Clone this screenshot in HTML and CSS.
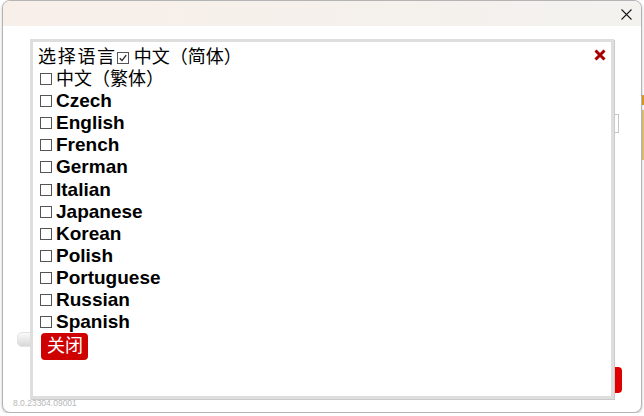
FILE: index.html
```html
<!DOCTYPE html>
<html>

<head>
    <meta charset="utf-8">
    <title>选择语言</title>
    <link rel="stylesheet" href="styles.css">
</head>

<body>
    <div class="win">
        <div class="titlebar">
            <svg class="winclose" width="11" height="11" viewBox="0 0 11 11">
                <path d="M0.5 0.5L10.5 10.5M10.5 0.5L0.5 10.5" stroke="#1a1a1a" stroke-width="1.1" fill="none" />
            </svg>
        </div>
        <div class="winbody">
            <div class="bg-input"></div>
            <div class="bg-btn"></div>
            <div class="bg-red"></div>
            <div class="ver">8.0.23304.09001</div>
        </div>

        <div class="lang">
            <div class="row">
                <svg class="x" width="12" height="12" viewBox="0 0 12 12">
                    <path d="M1.5 1.5L10.5 10.5M10.5 1.5L1.5 10.5" stroke="#a80000" stroke-width="3" fill="none" />
                </svg>
                <span class="ttl">选择语言</span><svg class="cb on" width="12" height="12" viewBox="0 0 12 12">
                    <rect x="0.5" y="0.5" width="11" height="11" fill="#fff" stroke="#555" />
                    <path d="M2.8 6.2L5 8.6L9.2 3.2" stroke="#222" stroke-width="1.3" fill="none" />
                </svg><span>中文（简体）</span>
            </div>
            <div class="row"><span class="cb"></span><span>中文（繁体）</span></div>
            <div class="row"><span class="cb"></span><b>Czech</b></div>
            <div class="row"><span class="cb"></span><b>English</b></div>
            <div class="row"><span class="cb"></span><b>French</b></div>
            <div class="row"><span class="cb"></span><b>German</b></div>
            <div class="row"><span class="cb"></span><b>Italian</b></div>
            <div class="row"><span class="cb"></span><b>Japanese</b></div>
            <div class="row"><span class="cb"></span><b>Korean</b></div>
            <div class="row"><span class="cb"></span><b>Polish</b></div>
            <div class="row"><span class="cb"></span><b>Portuguese</b></div>
            <div class="row"><span class="cb"></span><b>Russian</b></div>
            <div class="row"><span class="cb"></span><b>Spanish</b></div>
            <button class="close">关闭</button>
        </div>
    </div>
</body>

</html>
```

FILE: styles.css
```css
body {
    margin: 0;
    background-color: white;
    /* bit of the page behind the window */
    background-image: linear-gradient(#e0a020, #e0a020), linear-gradient(#e9c677, #e9c677);
    background-repeat: no-repeat;
    background-size: 2px 10px, 2px 50px;
    background-position: right 0 top 95px, right 0 top 110px;
    font-family: "Liberation Sans", "Noto Sans CJK SC", sans-serif;
}

.win {
    position: relative;
    margin-left: 2px;
    width: 640px;
    height: 413px;
    box-sizing: border-box;
    border: 1px solid #b4b4b4;
    border-radius: 8px;
    background-color: #fff;
    box-shadow: 0 1px 3px rgba(0, 0, 0, 0.25);
    overflow: hidden;
}

.titlebar {
    height: 25px;
    display: flex;
    align-items: center;
    justify-content: flex-end;
    padding-right: 9px;
    background: linear-gradient(to right, #f8efe9, #f3f2ef);
}

.winclose {
    display: block;
    margin-top: 1px;
}

.winbody {
    height: 386px;
    display: flex;
    flex-direction: column;
}

.bg-input {
    align-self: flex-end;
    margin: 88px 22px 0 0;
    width: 200px;
    height: 19px;
    border: 1px solid #c4c4c4;
    box-sizing: border-box;
}

.bg-btn {
    margin: 199px 0 0 14px;
    width: 40px;
    height: 15px;
    border-radius: 5px;
    background: linear-gradient(#fafafa, #d8d8d8);
    border: 1px solid #e2e2e2;
    box-sizing: border-box;
}

.bg-red {
    align-self: flex-end;
    margin: 20px 19px 0 0;
    width: 80px;
    height: 26px;
    border-radius: 4px;
    background-color: #e00000;
}

.ver {
    margin: 5px 0 0 10px;
    font-size: 8.5px;
    line-height: 10px;
    color: #b8b8b8;
}

.lang {
    position: absolute;
    left: 27px;
    top: 38px;
    width: 584px;
    height: 360px;
    box-sizing: border-box;
    padding: 4px 5px 0 5px;
    border: 3px solid #dedede;
    box-shadow: 1px 1px 0 #cacaca;
    background-color: #fff;
    font-size: 18px;
    line-height: 22.1px;
    color: #000;
}

.row {
    height: 22.1px;
    white-space: nowrap;
}

.row b {
    font-size: 19px;
}

.ttl {
    letter-spacing: 1.7px;
}

.cb {
    display: inline-block;
    width: 12px;
    height: 12px;
    box-sizing: border-box;
    border: 1px solid #555;
    margin: 0 4px 0 2px;
}

svg.cb {
    border: 0;
    margin: 0 5px 0 0;
    vertical-align: -1px;
}

.x {
    float: right;
    margin-top: 3px;
}

.close {
    display: block;
    margin: 0 0 0 3px;
    height: 27px;
    padding: 0 5px 0 6px;
    border: 0;
    border-radius: 4px;
    background-color: #cf0000;
    color: #fff;
    font-family: "Liberation Sans", "Noto Sans CJK SC", sans-serif;
    font-size: 18px;
    line-height: 27px;
}
```
